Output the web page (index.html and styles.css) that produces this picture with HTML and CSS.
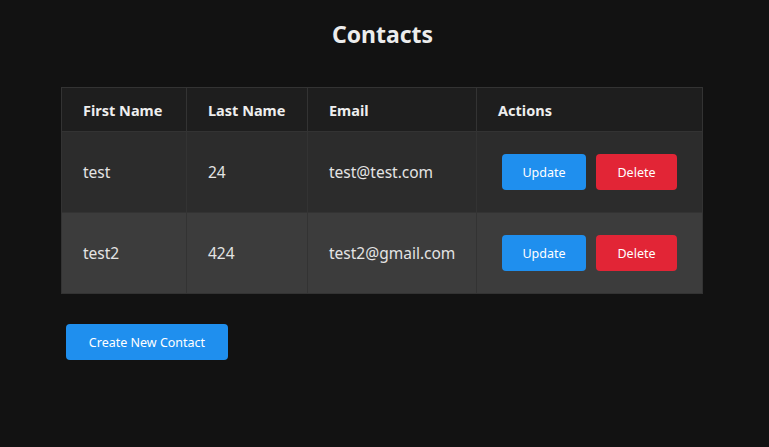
FILE: index.html
```html
<!DOCTYPE html>
<html>
<head>
<meta charset="utf-8">
<link rel="stylesheet" href="styles.css">
</head>
<body>
<main class="page">
  <h1 class="title">Contacts</h1>
  <table class="contacts">
    <colgroup>
      <col class="c1"><col class="c2"><col class="c3"><col class="c4">
    </colgroup>
    <thead>
      <tr>
        <th>First Name</th>
        <th>Last Name</th>
        <th>Email</th>
        <th>Actions</th>
      </tr>
    </thead>
    <tbody>
      <tr class="row-a">
        <td>test</td>
        <td>24</td>
        <td>test@test.com</td>
        <td><div class="actions"><button class="btn btn-blue upd">Update</button><button class="btn btn-red del">Delete</button></div></td>
      </tr>
      <tr class="row-b">
        <td>test2</td>
        <td>424</td>
        <td>test2@gmail.com</td>
        <td><div class="actions"><button class="btn btn-blue upd">Update</button><button class="btn btn-red del">Delete</button></div></td>
      </tr>
    </tbody>
  </table>
  <div class="footer">
    <button class="btn btn-blue create">Create New Contact</button>
  </div>
</main>
</body>
</html>
```
FILE: styles.css
```css
html, body {
  margin: 0;
  padding: 0;
  background: #121212;
  height: 100%;
}
body {
  font-family: "Noto Sans", "Open Sans", sans-serif;
  color: #e6e6e6;
}
.page {
  padding-top: 18px;
}
.title {
  margin: 0;
  text-align: center;
  font-size: 23px;
  font-weight: 700;
  line-height: 32px;
  color: #ececec;
  padding-right: 4px;
}
.contacts {
  margin: 37px 0 0 61px;
  width: 641px;
  border-collapse: collapse;
  table-layout: fixed;
}
.contacts th, .contacts td {
  border: 1px solid #333;
  text-align: left;
  padding: 0 0 0 21px;
  box-sizing: border-box;
}
.contacts th {
  background: #1e1e1e;
  height: 44px;
  font-size: 14.5px;
  font-weight: 700;
  color: #eeeeee;
}
.contacts td {
  height: 81px;
  font-size: 15.5px;
  color: #e4e4e4;
}
.c1 { width: 125px; }
.c2 { width: 121px; }
.c3 { width: 169px; }
.c4 { width: 226px; }
.row-a td { background: #2c2c2c; }
.row-b td { background: #3c3c3c; }
.contacts td:last-child { padding-left: 25px; }
.actions {
  display: flex;
  gap: 10px;
}
.btn {
  border: none;
  border-radius: 4px;
  height: 36px;
  font-family: inherit;
  font-size: 12.5px;
  color: #ffffff;
  padding: 0;
  flex-shrink: 0;
}
.btn-blue { background: #1f8fee; }
.btn-red { background: #e22536; }
.upd { width: 84px; }
.del { width: 81px; }
.footer {
  padding: 30px 0 0 66px;
}
.create { width: 162px; }
```
